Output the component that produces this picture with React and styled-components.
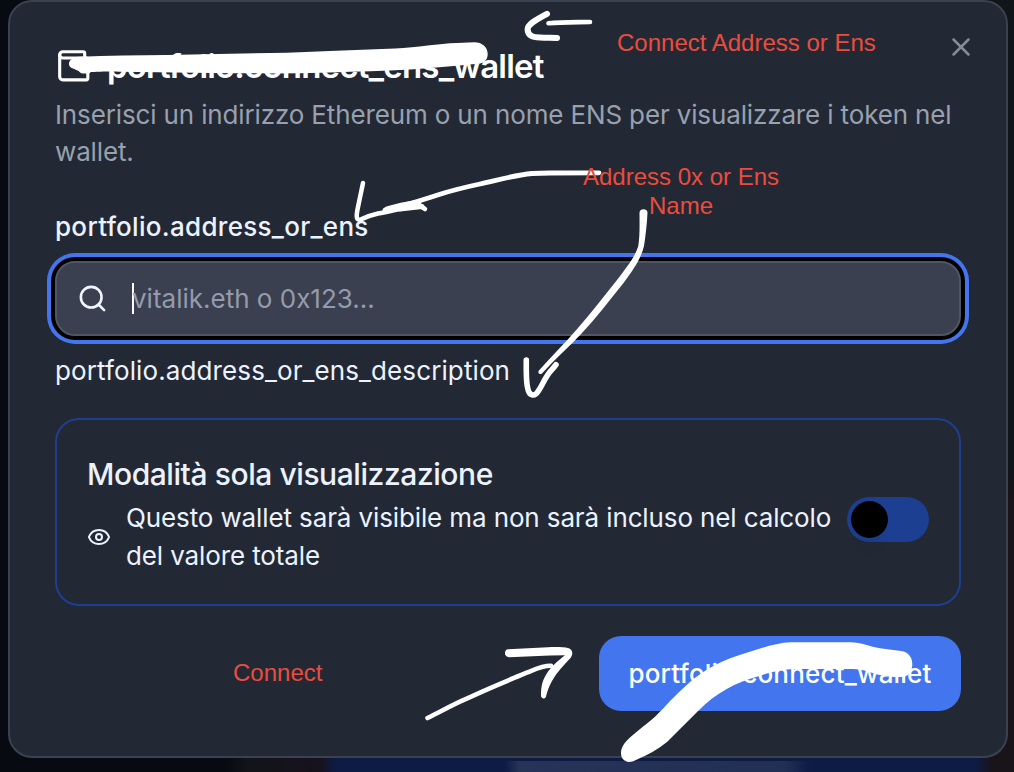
import React from "react";
import styled, { createGlobalStyle } from "styled-components";
import { Wallet, X, Search, Eye } from "lucide-react";

const GlobalStyle = createGlobalStyle`
  *, *::before, *::after { box-sizing: border-box; }
  html, body { margin: 0; padding: 0; background: #070a11; }
  body { font-family: "Inter", "Noto Sans", sans-serif; overflow: hidden; }
  p, h2, h3 { margin: 0; }
`;

const Backdrop = styled.main`
  position: relative;
  width: 1014px;
  height: 772px;
  padding: 0 6px 14px 8px;
  overflow: hidden;
  background:
    linear-gradient(90deg, transparent, rgba(84, 92, 120, 0.36) 14px, rgba(84, 92, 120, 0.3) 280px, transparent) 505px 761px / 305px 11px no-repeat,
    linear-gradient(90deg, #070a11 0, #070a11 225px, #121419 250px, #17121d 320px, #0d1c45 336px, #0d1c45 975px, #19131a 992px) 0 756px / 100% 16px no-repeat,
    linear-gradient(180deg, #101519 0, #101519 470px, #19131a 500px) 990px 0 / 24px 100% no-repeat,
    #070a11;
`;

const Dialog = styled.section`
  display: flex;
  flex-direction: column;
  height: 758px;
  padding: 45px 45px 0;
  border: 2px solid #3b4150;
  border-radius: 24px;
  background: #222935;
`;

const Header = styled.header`
  display: flex;
  justify-content: space-between;
  height: 49px;
`;

const Title = styled.h2`
  display: flex;
  gap: 14.5px;
  color: #fff;
  font-size: 33px;
  font-weight: 600;
  line-height: 38px;
  letter-spacing: -0.8px;
`;

const CloseButton = styled.button`
  display: flex;
  width: 30px;
  height: 30px;
  margin: -15px -15px 0 0;
  padding: 0;
  border: 0;
  background: none;
  color: #868b96;
`;

const Body = styled.p`
  color: ${p => p.$color || "#edf2ff"};
  font-size: 26px;
  line-height: ${p => p.$line || "37px"};
  letter-spacing: ${p => p.$spacing || "0"};
`;

const Line = styled.span`
  display: block;
  width: fit-content;
  white-space: nowrap;
`;

const Label = styled.label`
  margin-top: 37.5px;
  color: #edf2ff;
  font-size: 26px;
  font-weight: 450;
  line-height: 37px;
  letter-spacing: 0.3px;
`;

const Field = styled.div`
  display: flex;
  align-items: center;
  height: 75px;
  margin: 16.5px 0 16px;
  padding-left: 20px;
  border: 2px solid #4e5663;
  border-radius: 20px;
  background: #3b4050;
  box-shadow: 0 0 0 4px #000, 0 0 0 8px #4275ee;
  color: #f1f5ff;
`;

const Caret = styled.span`
  width: 2px;
  height: 31px;
  margin: 0 -2px 0 24px;
  background: #fff;
`;

const Placeholder = styled.span`
  color: #959baa;
  font-size: 26px;
  line-height: 36px;
`;

const Panel = styled.section`
  display: flex;
  align-items: center;
  justify-content: space-between;
  height: 188px;
  margin-top: 29px;
  padding: 0 30px;
  border: 2px solid #1e3f8f;
  border-radius: 24px;
  color: #edf2ff;
`;

const PanelCopy = styled.div`
  display: flex;
  flex-direction: column;
  gap: 10.5px;
  padding-top: 10px;
`;

const PanelTitle = styled.h3`
  font-size: 30px;
  font-weight: 450;
  line-height: 30px;
  letter-spacing: -0.43px;
`;

const PanelRow = styled.div`
  display: flex;
  align-items: center;
  gap: 15px;

  svg { flex: none; }
`;

const Toggle = styled.span`
  flex: none;
  width: 82px;
  height: 45px;
  margin-top: 15px;
  padding: 4px;
  border-radius: 23px;
  background: #1d3f91;
`;

const Thumb = styled.span`
  display: block;
  width: 37px;
  height: 37px;
  border-radius: 50%;
  background: #000;
  box-shadow: 0 16px 12px -6px rgba(0, 0, 0, 0.04);
`;

const Footer = styled.footer`
  display: flex;
  justify-content: flex-end;
  margin-top: 30px;
`;

const ConnectButton = styled.button`
  width: 362px;
  height: 75px;
  padding: 0;
  border: 0;
  border-radius: 22px;
  background: #4275ee;
  color: #fff;
  font: 450 26px "Inter", "Noto Sans", sans-serif;
  letter-spacing: 0.19px;
`;

const Ink = styled.svg`
  position: absolute;
  inset: 0;
  fill: none;
  stroke: #fff;
  stroke-linecap: round;
  stroke-linejoin: round;
`;

const Note = styled.p`
  position: absolute;
  left: ${p => p.$left}px;
  top: ${p => p.$top}px;
  color: #eb4c3d;
  font-family: "Liberation Sans", Arial, sans-serif;
  font-size: 24px;
  line-height: 29px;
  text-align: center;
  white-space: nowrap;
`;

function Markup() {
  return (
    <Ink width="1014" height="772" viewBox="0 0 1014 772" aria-hidden="true">
      <g fill="#fff" stroke="none">
        <path d="M69 64C69 60 73 57.5 79 56.8C108 55.3 138 55.5 167 55L287 52.7L330 51L395 48.5C418 47.5 438 43.5 457 43L474 42.3C482 42.2 487.7 47 487.7 54C487.7 59 485 62.6 480 63.6C457 66 433 68 410 69.5C383 71.2 357 71.5 330 72.5C291 73.8 252 73.4 213 73L120 71.7C109 71.4 94 71.6 86 72.6C80 73 77 70 73 68.6C70 67.4 69 66 69 64Z" />
        <path d="M621 753C621 747 625 742 630 737.5C638 730 647 724 655 716.7C666 706 675 695 686.7 685C695 677 704 671 713.3 666C724 660 735 656 746.7 652.7C761 648.3 776 642.7 791 642.2L850 642.2C862 642.5 870 646.5 880 648.3L901 651C909 652 912.3 658 912.3 664C912.3 671 909 676 903 677C895 677.4 888 676.6 880 675C871 673 863 669 853.3 669L793 669C780 669.4 768 673 756.7 676.7C746 680 736 683.5 726.7 689C716 695 707 702 698.3 710.7L667 742C658 749.5 647 755 637 759.6C634 761 632 762 629 762C624 761.5 621 758 621 753Z" />
        <path d="M639.5 212.5C639.5 208 647.5 208 647.5 212.5C647 224 645.5 236 644 246C641 259 633 270 623.5 283C609 301 596 318 582 333C569 347 555 359 542 373.5C539.5 375 537.5 373 538.7 370.7C552 356 566 342 578 328C591 313 604 296 617 280C627 267 635 257 638.3 246C640 235 639.5 224 639.5 212.5Z" />
        <path d="M508 649.3L548 647.2C556 647 564 647 568 648C572.8 649.5 573.5 654 570.5 658C564 665 557 672 552 681C549 686 547 692 546 696.5C545 699.5 541.5 699 541 696C540.8 687 542.5 680 546.5 674C551.5 666 558 661 565 655.3L550 655.5L509 657.3C503.5 656.8 504 649.5 508 649.3Z" />
      </g>
      <path strokeWidth="6" d="M547 13.8C538 19 527.6 23.5 527.6 29.5C527.8 35.5 533 37.6 540 37.6C546 37.9 551 37.8 557 38" />
      <path strokeWidth="4.6" d="M548.5 23.3C562 22 576 22.3 590 22" />
      <path strokeWidth="4.8" d="M599 172.8L550 173L532 173.5C514 175.3 498 180 480 184C466 187 453 190 440 194.3C422 200 405 206 385 210" />
      <path strokeWidth="4.5" d="M363 183L358 207C356.5 214 355.5 220.6 360 219.7C366 217 371 215 378 213.5C391 211.5 403 207.5 414 206.5C419 206 422 206.5 425 209" />
      <path strokeWidth="5" d="M387 209C397 206.5 407 203 419 202.5M400 209L422 206.5" />
      <path strokeWidth="5.6" d="M526.3 360C526.2 370 526 382 527.7 388C529 396 534.5 397 538 391.5C542 386 543 382 547 376C550 371 553 369 556 364.7" />
      <path strokeWidth="4.6" d="M427.5 718C440 712 453 704.5 466.7 698.7C487 689 507 681 526.7 672.7C536 669 543 665.5 551 665.8" />
    </Ink>
  );
}

export default function App() {
  return (
    <>
      <GlobalStyle />
      <Backdrop>
        <Dialog role="dialog" aria-labelledby="wallet-title">
          <Header>
            <Title id="wallet-title">
              <Wallet size={37.5} />
              portfolio.connect_ens_wallet
            </Title>
            <CloseButton aria-label="Chiudi"><X size={30} /></CloseButton>
          </Header>
          <Body $color="#99a0ae" $spacing="-0.14px">
            <Line>Inserisci un indirizzo Ethereum o un nome ENS per visualizzare i token nel</Line>
            <Line>wallet.</Line>
          </Body>
          <Label>portfolio.address_or_ens</Label>
          <Field>
            <Search size={31} />
            <Caret />
            <Placeholder>vitalik.eth o 0x123...</Placeholder>
          </Field>
          <Body $spacing="0.11px">portfolio.address_or_ens_description</Body>
          <Panel>
            <PanelCopy>
              <PanelTitle>Modalità sola visualizzazione</PanelTitle>
              <PanelRow>
                <Eye size={24} />
                <Body $spacing="-0.12px" $line="38px">
                  Questo wallet sarà visibile ma non sarà incluso nel calcolo<br />del valore totale
                </Body>
              </PanelRow>
            </PanelCopy>
            <Toggle role="switch" aria-checked="false"><Thumb /></Toggle>
          </Panel>
          <Footer>
            <ConnectButton>portfolio.connect_wallet</ConnectButton>
          </Footer>
        </Dialog>
        <Markup />
        <Note $left={617} $top={28}>Connect Address or Ens</Note>
        <Note $left={583} $top={162}>Address 0x or Ens<br />Name</Note>
        <Note $left={233} $top={658}>Connect</Note>
      </Backdrop>
    </>
  );
}
